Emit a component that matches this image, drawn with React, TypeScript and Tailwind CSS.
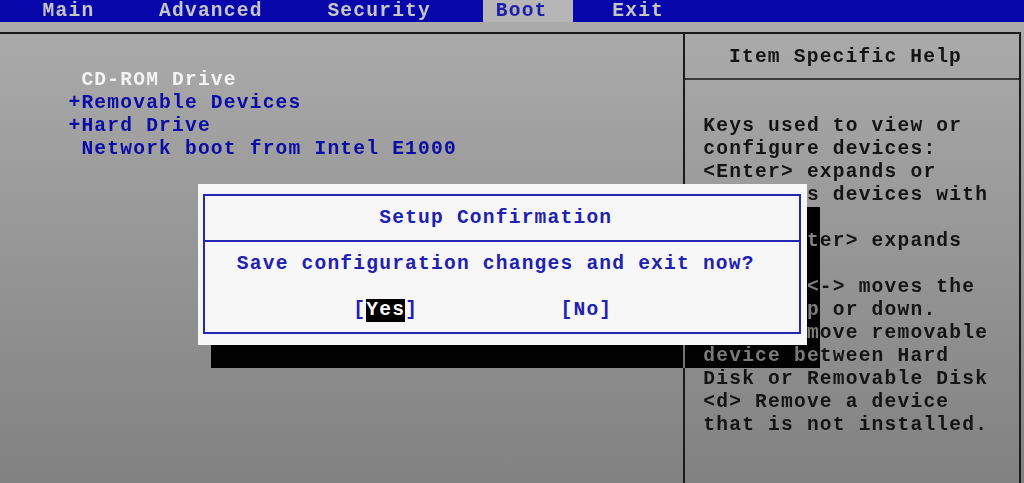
export default function App() {
  // text-mode screen: one cell is 12.95px wide and 23px high, first column at x=3.7
  const helpLines = [
    'Keys used to view or',
    'configure devices:',
    '<Enter> expands or',
    'collapses devices with',
    'a + or -',
    '<Ctrl+Enter> expands',
    'all',
    '<+> and <-> moves the',
    'device up or down.',
    '<n> May move removable',
    'device between Hard',
    'Disk or Removable Disk',
    '<d> Remove a device',
    'that is not installed.',
  ]

  return (
    <div className="relative w-[1024px] h-[483px] overflow-hidden bg-linear-to-b from-[#adadad] to-[#818181] font-['Liberation_Mono',monospace] font-bold text-[19.6px] tracking-[1.19px] leading-[23px]">
      {/* Menu bar */}
      <div className="h-[22px] leading-[22px] bg-[#0707ab] pl-[3.7px] flex whitespace-pre text-[#c6c6c6]">
        <span>{'   Main     Advanced     Security    '}</span>
        <span className="bg-[#b6b6b6] text-[#1e1eaa]">{' Boot  '}</span>
        <span>{'   Exit'}</span>
      </div>

      {/* Frame */}
      <div className="mt-[10px] w-[1021px] h-[451px] border-t-2 border-r-2 border-[#1b1b1b] flex">
        <div className="w-[685px] border-r-2 border-[#1b1b1b] pt-[34.5px] pl-[68.45px] whitespace-pre">
          <div className="text-[#f4f4f4]">{' CD-ROM Drive'}</div>
          <div className="text-[#0b0ba6]">+Removable Devices</div>
          <div className="text-[#0b0ba6]">+Hard Drive</div>
          <div className="text-[#0b0ba6]">{' Network boot from Intel E1000'}</div>
        </div>

        <div className="flex-1 flex flex-col text-[#141414] whitespace-pre">
          <div className="h-[46px] border-b-2 border-[#3a3a3a] pt-[11.5px] pl-[44px]">Item Specific Help</div>
          <div className="pt-[34.5px] pl-[18.3px]">
            {helpLines.map((line, i) => (
              <div key={i}>{line}</div>
            ))}
          </div>
        </div>
      </div>

      {/* Dialog shadow: darkens the cells and turns their text grey */}
      <div className="absolute left-[210.9px] top-[206.5px] w-[608.65px] h-[161px] bg-linear-to-b from-[#9b9b9b] to-[#8d8d8d] mix-blend-difference" />

      {/* Setup Confirmation dialog */}
      <div className="absolute left-[197.95px] top-[183.5px] w-[608.65px] h-[161px] bg-[#f7f7f7] px-[5.5px] py-[10.5px]">
        <div className="h-full border-2 border-[#2626b4] flex flex-col text-[#2020b2] whitespace-pre">
          <div className="h-[46px] border-b-2 border-[#2626b4] pt-[10.5px] pl-[173.8px]">Setup Confirmation</div>
          <div className="mt-[10.5px] pl-[31.35px]">Save configuration changes and exit now?</div>
          <div className="mt-[23px] pl-[147.9px] flex">
            <span>[</span>
            <span className="bg-black text-white">Yes</span>
            <span>{']           [No]'}</span>
          </div>
        </div>
      </div>
    </div>
  )
}
